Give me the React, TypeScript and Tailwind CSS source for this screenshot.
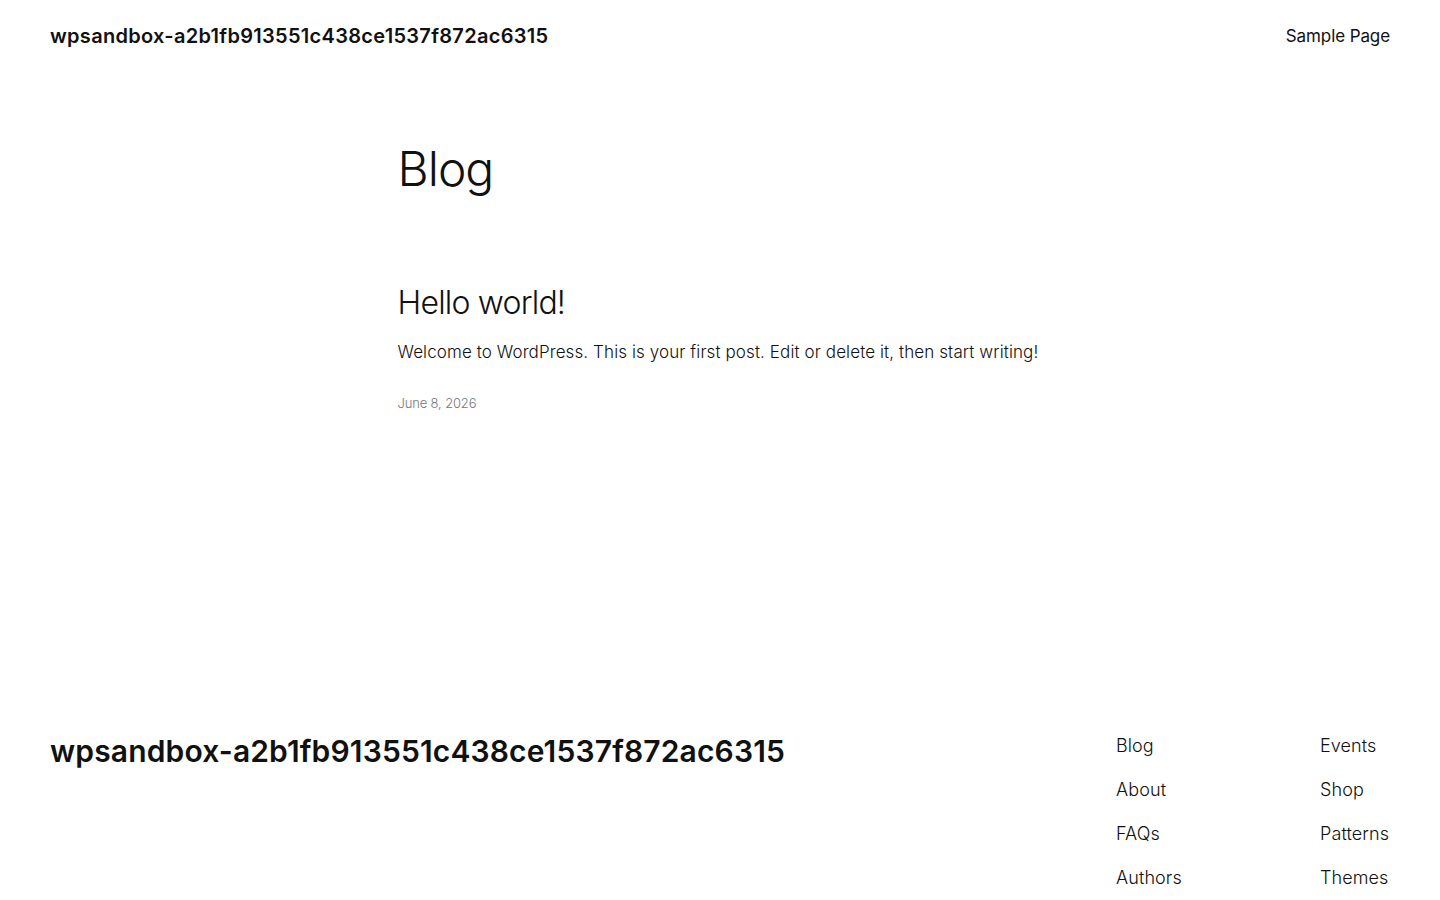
const primaryLinks = ["Blog", "About", "FAQs", "Authors"]
const secondaryLinks = ["Events", "Shop", "Patterns", "Themes"]

const siteName = "wpsandbox-a2b1fb913551c438ce1537f872ac6315"

export default function App() {
  return (
    <div className="min-h-screen bg-white text-[#111111] [font-family:Inter,'Noto_Sans',sans-serif]">
      <header className="flex items-center justify-between px-[50px] pt-[23px]">
        <a className="text-[20px] font-semibold leading-[26px] tracking-[0.3px]">{siteName}</a>
        <nav>
          <a className="text-[17px] leading-[26px] tracking-[-0.1px]">Sample Page</a>
        </nav>
      </header>

      <main className="mx-auto w-[645px] pt-[92px]">
        <h1 className="text-[48px] font-light leading-[56px] tracking-[-1px]">Blog</h1>

        <article className="mt-[86px]">
          <h2 className="text-[32px] font-light leading-[40px] tracking-[-0.8px]">Hello world!</h2>
          <p className="mt-[15px] text-[17px] font-light leading-[28px] tracking-[0.1px]">
            Welcome to WordPress. This is your first post. Edit or delete it, then start writing!
          </p>
          <p className="mt-[27px] text-[13px] font-light leading-[20px] tracking-[-0.15px] text-[#777777]">
            June 8, 2026
          </p>
        </article>
      </main>

      <footer className="mt-[320px] flex justify-between px-[50px] pb-[40px]">
        <div className="text-[30px] font-semibold leading-[36px] tracking-[0.15px]">{siteName}</div>
        <div className="grid grid-cols-[204px_70px]">
          <ul className="flex flex-col gap-[18px]">
            {primaryLinks.map((link) => (
              <li key={link} className="whitespace-nowrap text-[18px] font-light leading-[26px] tracking-[0.1px]">
                {link}
              </li>
            ))}
          </ul>
          <ul className="flex flex-col gap-[18px]">
            {secondaryLinks.map((link) => (
              <li key={link} className="whitespace-nowrap text-[18px] font-light leading-[26px] tracking-[0.1px]">
                {link}
              </li>
            ))}
          </ul>
        </div>
      </footer>
    </div>
  )
}
